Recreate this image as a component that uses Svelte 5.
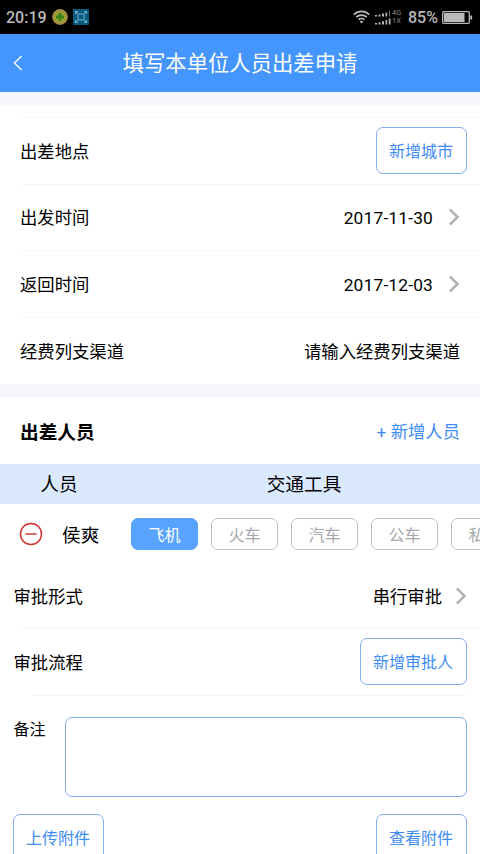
<script>
  const transports = ['飞机', '火车', '汽车', '公车', '私车'];

  const dates = [
    { label: '出发时间', value: '2017-11-30' },
    { label: '返回时间', value: '2017-12-03' }
  ];

  let selected = $state('飞机');
  let remark = $state('');
</script>

{#snippet arrow()}
  <svg class="arrow" width="12" height="18" viewBox="0 0 12 18">
    <path d="M1.8 1.4 9.6 9 1.8 16.6" fill="none" stroke="#b2b2b2" stroke-width="2.5" />
  </svg>
{/snippet}

<div class="page">
  <div class="status">
    <span class="time">20:19</span>
    <svg class="app-icon" width="16" height="16" viewBox="0 0 16 16">
      <circle cx="8" cy="8" r="7.9" fill="#a58b45" />
      <circle cx="8" cy="8" r="5.8" fill="#9aa136" />
      <path d="M6.5 4h3v2.500h2.500v3H9.500v2.500h-3V9.500H4v-3h2.500z" fill="#3f7f1a" />
    </svg>
    <svg class="shot-icon" width="16" height="16" viewBox="0 0 16 16">
      <rect width="16" height="16" rx="1" fill="#09597f" />
      <g fill="none" stroke="#78b6cb" stroke-width="1">
        <rect x="5" y="5" width="6" height="6" rx="1" />
        <path d="M2.500 5V2.500H5M11 2.500h2.500V5M13.500 11v2.500H11M5 13.500H2.500V11M3 3l2 2M13 3l-2 2M3 13l2-2M13 13l-2-2" />
      </g>
    </svg>

    <svg class="wifi" width="17" height="14" viewBox="0 0 17 14">
      <g fill="none" stroke="#b9b9b9" stroke-width="1.7">
        <path d="M.8 4.600a11 11 0 0 1 15.400 0" />
        <path d="M3.200 7.200a7.600 7.600 0 0 1 10.600 0" />
        <path d="M5.600 9.700a4.200 4.200 0 0 1 5.800 0" />
      </g>
      <path d="M6.700 11.500a2.600 2.600 0 0 1 3.600 0L8.500 13.600z" fill="#b9b9b9" />
    </svg>
    <svg class="signal" width="17" height="15" viewBox="0 0 17 15">
      <g fill="#b5b5b5">
        <path d="M0 5h2v1.500H0zM3.500 4.500h2v2h-2zM7 3.500h2v3H7zM10.500 2.500h1.700v4h-1.700z" />
        <path d="M0 13h2v1.500H0zM3.500 12.300h2v2.200h-2zM7 11.300h2v3.200H7zM10.500 10h1.700v4.500h-1.700zM13.800 8.500h1.700v6h-1.700z" />
      </g>
      <path d="M14 .5h1v6h-1z" fill="#777" />
    </svg>
    <span class="net"><span>4G</span><span>1X</span></span>
    <span class="percent">85%</span>
    <svg class="battery" width="31" height="13" viewBox="0 0 31 13">
      <rect x=".7" y=".7" width="26.600" height="11.600" rx="1" fill="none" stroke="#b9b9b9" stroke-width="1.300" />
      <rect x="2" y="2" width="20.500" height="9" fill="#b9b9b9" />
      <rect x="28.300" y="4.500" width="1.800" height="4" fill="#b9b9b9" />
    </svg>
  </div>

  <header class="navbar">
    <svg class="back" width="10" height="16" viewBox="0 0 10 16">
      <path d="M8.600 1 1.400 8l7.200 7" fill="none" stroke="#fff" stroke-width="1.300" />
    </svg>
    <h1>填写本单位人员出差申请</h1>
  </header>

  <section class="trip">
    <div class="row">
      <span class="label">出差地点</span>
      <button class="btn">新增城市</button>
    </div>
    {#each dates as date}
      <div class="row">
        <span class="label">{date.label}</span>
        <span class="value"><span class="date">{date.value}</span>{@render arrow()}</span>
      </div>
    {/each}
    <div class="row">
      <span class="label">经费列支渠道</span>
      <span class="label">请输入经费列支渠道</span>
    </div>
  </section>

  <section class="people">
    <div class="people-head">
      <h2>出差人员</h2>
      <span class="add">+ 新增人员</span>
    </div>
    <div class="table-head">
      <span class="col-name">人员</span>
      <span class="col-tool">交通工具</span>
    </div>
    <div class="person">
      <svg class="remove" width="24" height="24" viewBox="0 0 24 24">
        <g fill="none" stroke="#d0342f" stroke-width="1.500">
          <circle cx="12" cy="12" r="10.500" />
          <path d="M6.500 12h11" />
        </g>
      </svg>
      <span class="name">侯爽</span>
      <div class="tools">
        {#each transports as item}
          <button class="pill" class:active={item === selected} onclick={() => (selected = item)}>{item}</button>
        {/each}
      </div>
    </div>
  </section>

  <section class="approval">
    <div class="row">
      <span class="label">审批形式</span>
      <span class="value"><span class="label">串行审批</span>{@render arrow()}</span>
    </div>
    <div class="row">
      <span class="label">审批流程</span>
      <button class="btn">新增审批人</button>
    </div>
    <div class="remark">
      <label for="remark">备注</label>
      <textarea id="remark" bind:value={remark}></textarea>
    </div>
    <div class="files">
      <button class="btn">上传附件</button>
      <button class="btn">查看附件</button>
    </div>
  </section>
</div>

<style>
  :global(body) {
    background: #fff;
    overflow: hidden;
  }

  .page {
    width: 480px;
    height: 854px;
    overflow: hidden;
    display: flex;
    flex-direction: column;
    background: #f6f7fc;
    font-family: Roboto, 'Noto Sans CJK SC', sans-serif;
    font-size: 17.33px;
    color: #000;
  }

  .page > * {
    flex-shrink: 0;
  }

  button {
    font-family: inherit;
    padding: 0;
    cursor: pointer;
  }

  .status {
    height: 34px;
    box-sizing: border-box;
    padding: 0 8px 0 6px;
    display: flex;
    align-items: center;
    background: #000;
    color: #b9b9b9;
    font-size: 16px;
    font-weight: 500;
  }

  .time {
    width: 46px;
  }

  .shot-icon {
    margin-left: 5px;
  }

  .wifi {
    margin-left: auto;
  }

  .signal {
    margin-left: 5px;
  }

  .net {
    display: flex;
    flex-direction: column;
    width: 16px;
    font-size: 7.5px;
    font-weight: 400;
    line-height: 8px;
    color: #8a8a8a;
  }

  .percent {
    width: 34px;
  }

  .battery {
    margin-right: -1px;
  }

  .navbar {
    display: grid;
    grid-template-columns: 40px 1fr 40px;
    align-items: center;
    height: 58px;
    background: #4495fc;
    color: #fff;
  }

  .back {
    margin-left: 13px;
  }

  h1 {
    margin: 0;
    padding-top: 2px;
    font-size: 21.33px;
    font-weight: 400;
    line-height: 56px;
    text-align: center;
  }

  .trip {
    margin-top: 14px;
    padding-top: 11px;
    background: #fff;
  }

  .row {
    display: flex;
    align-items: center;
    justify-content: space-between;
    height: 66.67px;
    line-height: 26px;
    background: linear-gradient(#f6f6f8, #f6f6f8) 20px 0 / 100% 1px no-repeat;
  }

  .trip .row {
    padding: 0 20px;
  }

  .trip .btn {
    margin-right: -7px;
  }

  .label {
    padding-top: 3px;
  }

  .value {
    display: flex;
    align-items: center;
  }

  .date {
    padding-top: 2px;
    letter-spacing: 0.18px;
  }

  .arrow {
    margin-left: 15px;
  }

  .approval .arrow {
    margin-left: 13px;
  }

  .btn {
    box-sizing: border-box;
    height: 47px;
    padding: 0 13px 0 12px;
    border: 1px solid #82aeea;
    border-radius: 7px;
    background: #fff;
    color: #3f8cf5;
    font-size: 16px;
  }

  .people {
    margin-top: 13.3px;
    background: #fff;
  }

  .people-head {
    display: flex;
    align-items: center;
    justify-content: space-between;
    height: 67px;
    padding: 0 20px;
  }

  h2 {
    margin: 0;
    font-size: 18.67px;
    font-weight: 700;
  }

  .add {
    color: #3f8cf5;
  }

  .table-head {
    display: flex;
    box-sizing: border-box;
    height: 40px;
    padding-top: 3px;
    line-height: 37px;
    background: #dbe9fe;
    font-size: 18.67px;
    text-align: center;
  }

  .col-name {
    width: 118px;
  }

  .col-tool {
    flex: 1;
    padding-left: 10px;
  }

  .person {
    display: flex;
    align-items: center;
    height: 60px;
    overflow: hidden;
  }

  .remove {
    flex-shrink: 0;
    margin-left: 19px;
  }

  .name {
    flex-shrink: 0;
    width: 69px;
    margin-left: 19px;
    font-size: 18.67px;
  }

  .tools {
    display: flex;
    gap: 13px;
  }

  .pill {
    flex-shrink: 0;
    box-sizing: border-box;
    width: 67px;
    height: 32px;
    border: 1px solid #bfbfc3;
    border-radius: 7px;
    background: #fff;
    color: #a6a8ad;
    font-size: 16px;
  }

  .pill.active {
    border-color: #57a3fe;
    background: #57a3fe;
    color: #fff;
  }

  .approval {
    flex: 1;
    background: #fff;
  }

  .approval .row {
    padding: 0 13px;
  }

  .approval .row:first-child {
    height: 64px;
    background: none;
  }

  .approval .row .label {
    padding-left: 0.5px;
  }

  .remark {
    display: flex;
    justify-content: space-between;
    padding: 22px 13px 0;
    background: linear-gradient(#f6f6f8, #f6f6f8) 33px 0 / 434px 1px no-repeat;
    font-size: 16px;
  }

  .remark label {
    padding-left: 0.5px;
    line-height: 25px;
  }

  textarea {
    box-sizing: border-box;
    width: 402px;
    height: 80px;
    border: 1px solid #82aeea;
    border-radius: 7px;
    resize: none;
    font: inherit;
  }

  .files {
    display: flex;
    justify-content: space-between;
    padding: 17px 13px 0;
  }
</style>
